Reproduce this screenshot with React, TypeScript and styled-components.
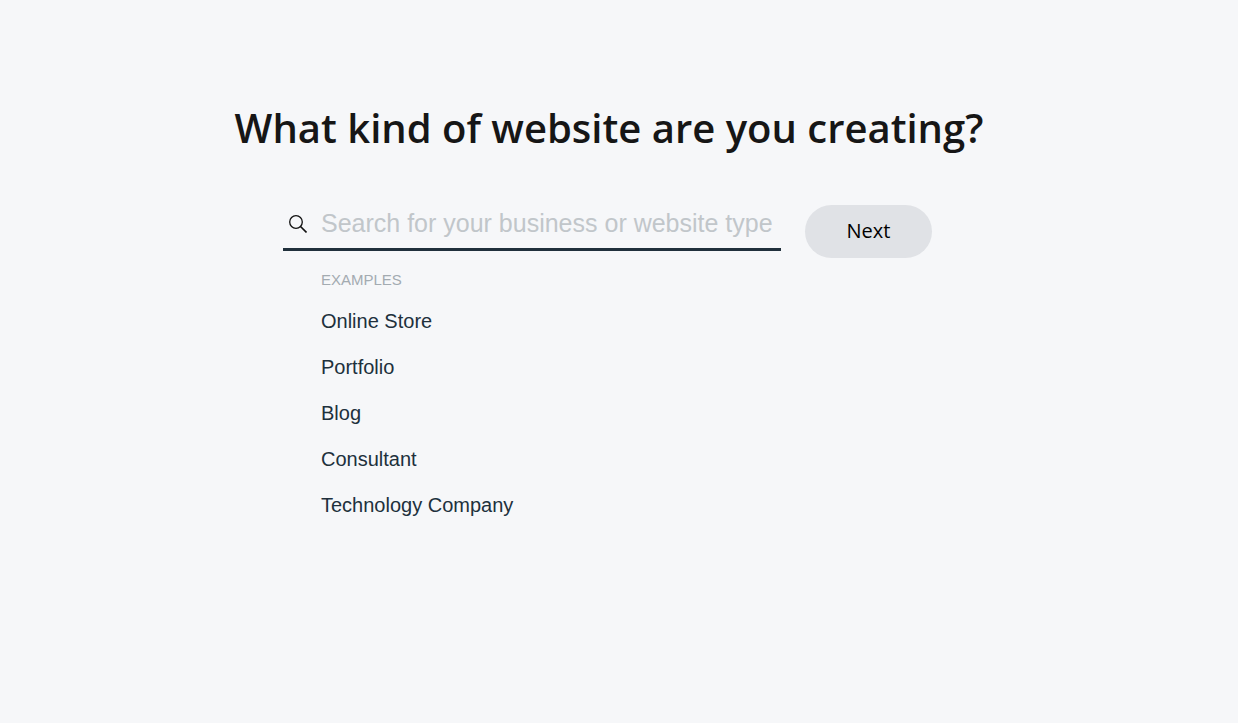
import React, { useState } from 'react';
import styled, { createGlobalStyle } from 'styled-components';

const GlobalStyle = createGlobalStyle`
  *, *::before, *::after { box-sizing: border-box; }
  body {
    margin: 0;
    background: #f6f7f9;
    color: #20303c;
    font-family: "Liberation Sans", Arial, sans-serif;
  }
`;

const Page = styled.main`
  display: flex;
  flex-direction: column;
  align-items: center;
  min-height: 100vh;
  padding: 100px 24px 40px;
`;

const Title = styled.h1`
  margin: 0 20px 0 0;
  color: #161616;
  font: 600 40px/56px "Open Sans", "Noto Sans", sans-serif;
  text-align: center;
`;

const Form = styled.form`
  display: flex;
  align-items: flex-start;
  gap: 24px;
  width: 100%;
  max-width: 649px;
  margin: 44px 23px 0 0;
`;

const Field = styled.div`
  flex: 1;
  min-width: 0;
`;

const SearchBox = styled.label`
  display: flex;
  align-items: center;
  gap: 14px;
  height: 51px;
  padding: 0 0 0 6px;
  border-bottom: 3px solid #20303c;
`;

const SearchIcon = styled.svg`
  flex: none;
  width: 18px;
  height: 18px;
`;

const SearchInput = styled.input`
  flex: 1;
  min-width: 0;
  height: 36px;
  padding: 0 0 2px;
  border: 0;
  outline: 0;
  background: transparent;
  color: #20303c;
  font: 25px/34px "Liberation Sans", Arial, sans-serif;

  &::placeholder {
    color: #c1c6ca;
    opacity: 1;
  }
`;

const NextButton = styled.button`
  flex: none;
  width: 127px;
  height: 53px;
  margin-top: 5px;
  padding: 0 0 2px;
  border: 0;
  border-radius: 27px;
  background: #e0e2e6;
  color: #000;
  font: 400 20px/24px "Open Sans", "Noto Sans", sans-serif;
`;

const Examples = styled.section`
  padding: 20px 0 0 38px;
`;

const Caption = styled.h2`
  margin: 0 0 9px;
  color: #a3abb1;
  font-size: 15px;
  font-weight: 400;
  line-height: 18px;
`;

const ExampleList = styled.ul`
  margin: 0;
  padding: 0;
  list-style: none;
`;

const Example = styled.button`
  display: block;
  padding: 0;
  border: 0;
  background: transparent;
  color: #20303c;
  font: 20px/46px "Liberation Sans", Arial, sans-serif;
  text-align: left;
  cursor: pointer;
`;

const examples = ['Online Store', 'Portfolio', 'Blog', 'Consultant', 'Technology Company'];

export default function App() {
  const [query, setQuery] = useState('');

  return (
    <>
      <GlobalStyle />
      <Page>
        <Title>What kind of website are you creating?</Title>
        <Form onSubmit={(event) => event.preventDefault()}>
          <Field>
            <SearchBox htmlFor="website-type">
              <SearchIcon viewBox="0 0 18 18" fill="none" stroke="#111" strokeWidth="1.3" aria-hidden="true">
                <circle cx="7" cy="7" r="6.3" />
                <path d="M11.5 11.5 17.5 17.5" strokeWidth="1.6" />
              </SearchIcon>
              <SearchInput
                id="website-type"
                type="text"
                aria-label="Business or website type"
                placeholder="Search for your business or website type"
                value={query}
                onChange={(event) => setQuery(event.target.value)}
              />
            </SearchBox>
            <Examples>
              <Caption>EXAMPLES</Caption>
              <ExampleList>
                {examples.map((name) => (
                  <li key={name}>
                    <Example type="button" onClick={() => setQuery(name)}>{name}</Example>
                  </li>
                ))}
              </ExampleList>
            </Examples>
          </Field>
          <NextButton type="submit">Next</NextButton>
        </Form>
      </Page>
    </>
  );
}
